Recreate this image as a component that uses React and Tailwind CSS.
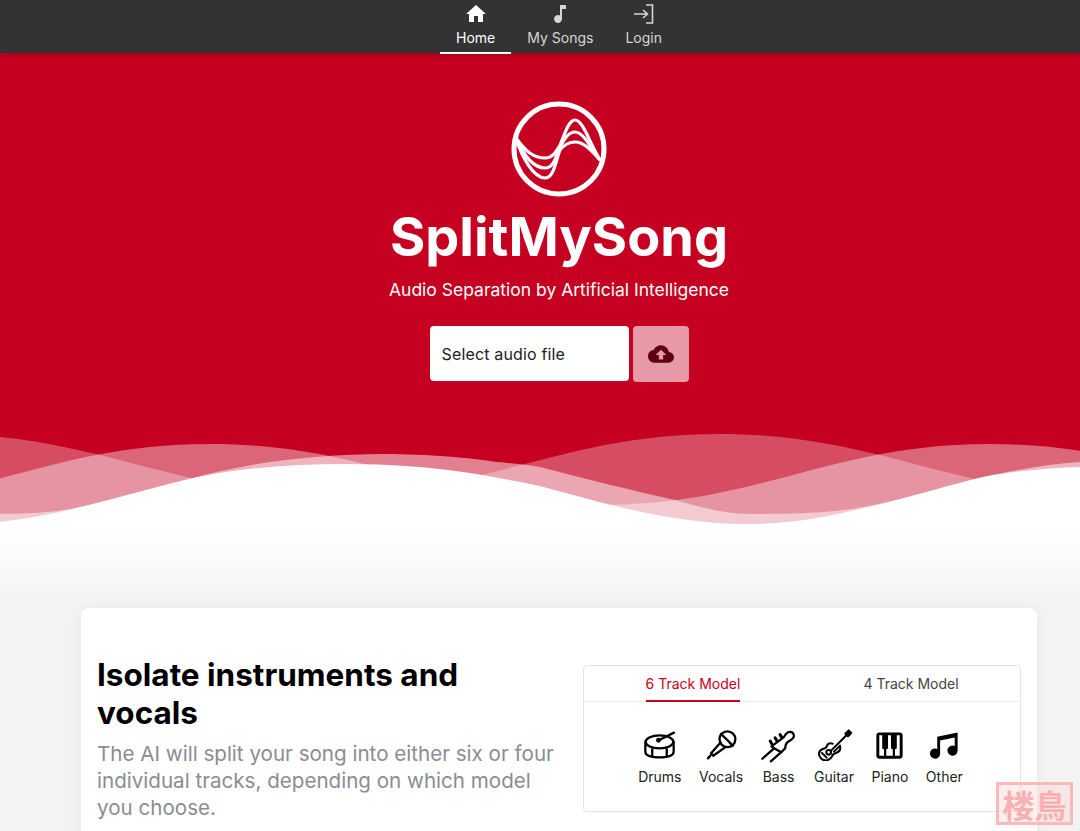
import { MdHome, MdMusicNote, MdCloudUpload, MdPiano } from "react-icons/md"

const font = { fontFamily: "Inter, sans-serif" }

function LoginIcon() {
  return (
    <svg width="24" height="24" viewBox="0 0 24 24" fill="none" stroke="currentColor" strokeWidth="1.6">
      <path d="M14 3h6.5v18H14" />
      <path d="M2 12h13M11 8l4.5 4-4.5 4" />
    </svg>
  )
}

function DrumIcon() {
  return (
    <svg width="33" height="28" viewBox="40 35 100 85" fill="none" stroke="currentColor" strokeWidth="7" strokeLinecap="round" strokeLinejoin="round">
      <ellipse cx="90" cy="68" rx="42" ry="20" />
      <path d="M47 68V98Q47 115 90 115Q133 115 133 98V68" />
      <path d="M68 90V112M112 90V112" />
      <path d="M88 63L134 40" />
      <circle cx="87" cy="63" r="4" fill="currentColor" />
    </svg>
  )
}

function MicIcon() {
  return (
    <svg width="33" height="32" viewBox="220 30 100 95" fill="none" stroke="currentColor" strokeWidth="7" strokeLinecap="round" strokeLinejoin="round">
      <circle cx="288" cy="60" r="24" />
      <path d="M268 44Q288 62 304 80" />
      <path d="M267 70L238 103L245 110L282 84" />
      <path d="M236 110L229 118" />
    </svg>
  )
}

function BassIcon() {
  return (
    <svg width="36" height="36" viewBox="388 25 110 110" fill="none" stroke="currentColor" strokeWidth="7" strokeLinecap="round" strokeLinejoin="round">
      <path d="M392 122L428 90M418 130L450 102" />
      <path d="M428 90L420 84L458 56Q468 34 484 42Q496 54 478 66Q462 72 462 90L450 102Z" />
      <path d="M421 76L416 68M436 66L431 58M451 56L446 48" strokeWidth="9" />
    </svg>
  )
}

function GuitarIcon() {
  return (
    <svg width="35" height="32" viewBox="15 26 105 96" fill="none" stroke="currentColor" strokeWidth="6" strokeLinecap="round" strokeLinejoin="round">
      <path d="M62 70Q48 66 44 78Q42 84 32 86Q18 92 22 106Q28 122 44 120Q56 118 60 108Q62 100 72 98Q88 92 84 78" />
      <path d="M58 90L104 44M66 94L84 76" />
      <path d="M100 40L110 30L118 38L108 48Z" fill="currentColor" />
      <circle cx="50" cy="96" r="7" />
      <path d="M30 98L44 112" />
    </svg>
  )
}

function OtherIcon() {
  return (
    <svg width="35" height="35" viewBox="0 0 24 24" fill="currentColor">
      <path d="M21 3v12.5a3.5 3.5 0 1 1-2-3.16V6.47L9 8.6v8.9a3.5 3.5 0 1 1-2-3.16V6z" />
    </svg>
  )
}

function Logo() {
  return (
    <svg width="100" height="100" viewBox="19 9 100 100" fill="none" stroke="white" className="block">
      <circle cx="69" cy="59" r="45" strokeWidth="5" />
      <g strokeWidth="3.2" strokeLinejoin="round">
        <path d="M26 48C36 62 44 68 55 68C63 68 66 62 70 55C74 47 78 30 85 30C93 30 99 52 110 70" />
        <path d="M26 48C34 66 44 78 55 78C64 78 66 66 70 57C74 50 78 42 85 42C93 42 100 56 110 70" />
        <path d="M26 48C32 68 44 88 55 88C64 88 66 70 70 60C74 55 78 52 85 52C94 52 101 60 110 70" />
      </g>
    </svg>
  )
}

function Waves() {
  return (
    <svg viewBox="0 430 1118 100" className="block w-full h-[100px]">
      <path
        fill="white"
        fillOpacity=".3"
        d="M-60 434C100 434 170 494 330 494C490 494 560 434 720 434C880 434 950 494 1110 494H1118V530H-60Z"
      />
      <path
        fill="white"
        fillOpacity=".4"
        d="M-180 505C-20 505 50 444 210 444C370 444 440 505 600 505C760 505 830 444 990 444C1150 444 1220 505 1380 505V530H-180Z"
      />
      <path
        fill="white"
        fillOpacity=".5"
        d="M-15 514C40 514 60 512 97 503C135 494 160 486 193 478C250 462 320 454 383 454C430 454 470 458 497 462C520 464 530 465 540 467C590 480 630 490 675 500C700 507 725 514 750 514C800 514 840 513 883 503C920 495 950 485 983 477C1020 469 1050 464 1080 462L1118 458V530H-15Z"
      />
      <path
        fill="white"
        d="M-50 524C10 524 50 515 97 503C130 494 160 486 193 478C240 468 290 464 345 464C390 464 430 467 463 472C490 476 515 481 540 486C600 502 670 524 747 524C800 524 840 514 885 503C920 494 950 485 983 477C1020 470 1050 468 1080 467L1118 465V530H-50Z"
      />
    </svg>
  )
}

const navItems = [
  { label: "Home", icon: <MdHome size={24} />, active: true },
  { label: "My Songs", icon: <MdMusicNote size={24} /> },
  { label: "Login", icon: <LoginIcon /> },
]

const tracks = [
  { label: "Drums", icon: <DrumIcon /> },
  { label: "Vocals", icon: <MicIcon /> },
  { label: "Bass", icon: <BassIcon /> },
  { label: "Guitar", icon: <GuitarIcon /> },
  { label: "Piano", icon: <MdPiano size={35} /> },
  { label: "Other", icon: <OtherIcon /> },
]

export default function App() {
  return (
    <div style={font} className="relative h-[831px] w-full overflow-hidden bg-[#f3f3f3]">
      <div className="w-[1118px]">
        <nav className="relative z-10 flex h-[53px] justify-center bg-[#333333] shadow-md">
          {navItems.map((item) => (
            <a
              key={item.label}
              className={`flex h-[54px] w-auto flex-col items-center px-4 pt-[2px] text-sm ${
                item.active ? "border-b-2 border-white text-white" : "text-[#d6d6d6]"
              }`}
            >
              {item.icon}
              <span className="mt-[2px] leading-[20px]">{item.label}</span>
            </a>
          ))}
        </nav>

        <section className="flex flex-col items-center bg-[#c50020] pt-[46px]">
          <Logo />
          <h1 className="mt-[8px] text-[54px] font-bold leading-[60px] text-white">SplitMySong</h1>
          <p className="mt-[9px] text-[17.5px] leading-[28px] text-white">Audio Separation by Artificial Intelligence</p>
          <div className="mt-[22px] flex gap-1">
            <div className="flex h-[55px] w-[199px] items-center rounded bg-white px-3 text-base tracking-[0.01em] text-[#222222]">
              Select audio file
            </div>
            <button className="flex h-[56px] w-[56px] items-center justify-center rounded bg-[#e799a8] text-[#5e0010]">
              <MdCloudUpload size={26} />
            </button>
          </div>
          <div className="mt-[48px] w-full">
            <Waves />
          </div>
        </section>

        <div className="h-[78px] bg-gradient-to-b from-white to-[#f3f3f3]" />

        <main className="mx-auto w-[956px] rounded-lg bg-white px-4 pt-[48px] pb-10 shadow-[0_0_16px_rgba(0,0,0,0.05)]">
          <div className="flex items-start justify-between">
            <div className="w-[465px]">
              <h2 className="text-[31.5px] font-bold leading-[38px] text-black">Isolate instruments and vocals</h2>
              <p className="mt-[8px] text-[20.6px] leading-[27px] text-[#8a8d91]">
                The AI will split your song into either six or four individual tracks, depending on which model you choose.
              </p>
            </div>
            <div className="mt-[9px] h-[147px] w-[438px] rounded border border-[#e3e3e3]">
              <div className="flex h-[36px] border-b border-[#eeeeee] text-sm">
                <div className="flex flex-1 justify-center">
                  <span className="h-[36px] border-b-2 border-[#c50020] pt-[8px] text-[#c50020]">6 Track Model</span>
                </div>
                <div className="flex flex-1 justify-center">
                  <span className="pt-[8px] text-[#444444]">4 Track Model</span>
                </div>
              </div>
              <div className="mt-[25px] flex justify-center gap-[17.5px] pr-[3px]">
                {tracks.map((track) => (
                  <div key={track.label} className="flex flex-col items-center">
                    <div className="flex h-[36px] items-center">{track.icon}</div>
                    <span className="mt-[4px] text-sm leading-[20px] text-[#222222]">{track.label}</span>
                  </div>
                ))}
              </div>
            </div>
          </div>
        </main>
      </div>

      <div
        className="absolute left-[996px] top-[782px] flex h-[43px] w-[77px] items-center justify-center border-[3px] border-[#f9b9b9] bg-[#ffc9c9]/30 text-[32px] font-bold leading-none text-[#f9b0b0]"
        style={{ fontFamily: '"Noto Sans CJK TC", sans-serif' }}
      >
        楼鳥
      </div>
    </div>
  )
}
